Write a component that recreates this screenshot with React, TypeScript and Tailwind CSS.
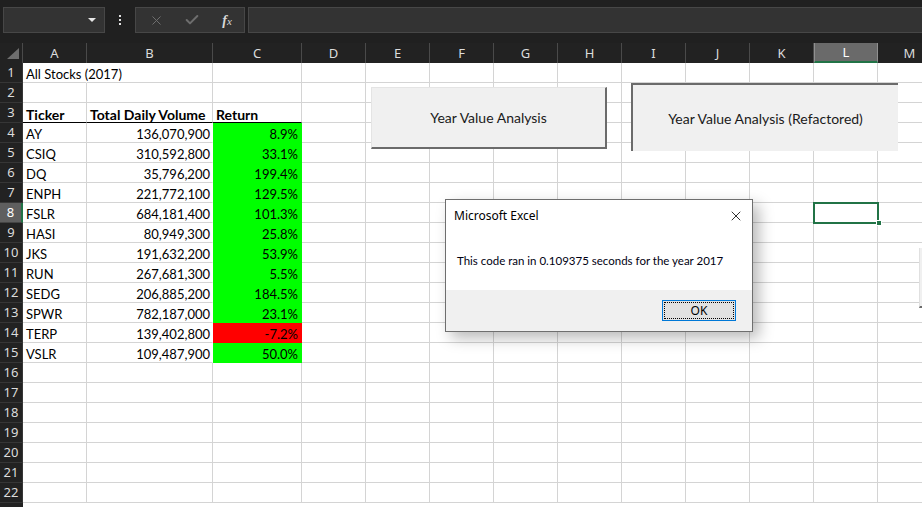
import { X, Check } from "lucide-react";

type Col = { letter: string; w: string };

const cols: Col[] = [
  { letter: "A", w: "w-[64px]" },
  { letter: "B", w: "w-[126px]" },
  { letter: "C", w: "w-[89px]" },
  { letter: "D", w: "w-[64px]" },
  { letter: "E", w: "w-[64px]" },
  { letter: "F", w: "w-[64px]" },
  { letter: "G", w: "w-[64px]" },
  { letter: "H", w: "w-[64px]" },
  { letter: "I", w: "w-[64px]" },
  { letter: "J", w: "w-[64px]" },
  { letter: "K", w: "w-[64px]" },
  { letter: "L", w: "w-[64px]" },
  { letter: "M", w: "w-[64px]" },
];

type Stock = { ticker: string; volume: string; ret: string };

const stocks: Stock[] = [
  { ticker: "AY", volume: "136,070,900", ret: "8.9%" },
  { ticker: "CSIQ", volume: "310,592,800", ret: "33.1%" },
  { ticker: "DQ", volume: "35,796,200", ret: "199.4%" },
  { ticker: "ENPH", volume: "221,772,100", ret: "129.5%" },
  { ticker: "FSLR", volume: "684,181,400", ret: "101.3%" },
  { ticker: "HASI", volume: "80,949,300", ret: "25.8%" },
  { ticker: "JKS", volume: "191,632,200", ret: "53.9%" },
  { ticker: "RUN", volume: "267,681,300", ret: "5.5%" },
  { ticker: "SEDG", volume: "206,885,200", ret: "184.5%" },
  { ticker: "SPWR", volume: "782,187,000", ret: "23.1%" },
  { ticker: "TERP", volume: "139,402,800", ret: "-7.2%" },
  { ticker: "VSLR", volume: "109,487,900", ret: "50.0%" },
];

function Toolbar() {
  return (
    <div className="flex h-[43px] items-start bg-[#202020] pt-[7px]">
      <div className="ml-[3px] flex h-[26px] w-[102px] items-center justify-end border border-[#474747] bg-[#333333] pr-[8px]">
        <div className="h-0 w-0 border-x-[4px] border-t-[4px] border-x-transparent border-t-[#e6e6e6]" />
      </div>
      <div className="flex h-[26px] w-[30px] flex-col items-center justify-center gap-[2px]">
        <div className="h-[2px] w-[2px] bg-[#e0e0e0]" />
        <div className="h-[2px] w-[2px] bg-[#e0e0e0]" />
        <div className="h-[2px] w-[2px] bg-[#e0e0e0]" />
      </div>
      <div className="flex h-[26px] w-[110px] items-center border border-[#474747] bg-[#333333]">
        <div className="flex w-[38px] justify-center pl-[2px]">
          <X size={15} strokeWidth={1.6} color="#6e6e6e" />
        </div>
        <div className="flex w-[36px] justify-center">
          <Check size={16} strokeWidth={3} color="#6e6e6e" />
        </div>
        <div className="flex w-[34px] justify-center font-['Liberation_Serif',serif] text-[14px] italic text-[#d8d8d8]">
          <span className="font-bold">f</span>
          <span className="mt-[3px] text-[11px]">x</span>
        </div>
      </div>
      <div className="ml-[3px] h-[26px] flex-1 border border-r-0 border-[#474747] bg-[#333333]" />
    </div>
  );
}

function ColumnHeaders() {
  return (
    <div className="flex h-[20px] bg-[#222222] font-['Noto_Sans',sans-serif] text-[13px] text-[#dcdcdc]">
      <div className="relative w-[23px] shrink-0 border-r border-[#4a4a4a]">
        <div className="absolute bottom-[4px] right-[3px] h-0 w-0 border-b-[11px] border-l-[12px] border-b-[#6e6e6e] border-l-transparent" />
      </div>
      {cols.map((c) => (
        <div
          key={c.letter}
          className={
            c.letter === "L"
              ? `${c.w} flex shrink-0 items-center justify-center border-x border-b-2 border-[#909090] border-b-[#217346] bg-[#6a6a6a] pt-[1px] leading-none text-white`
              : `${c.w} flex shrink-0 items-center justify-center border-r border-[#4a4a4a] pt-[1px] leading-none`
          }
        >
          {c.letter}
        </div>
      ))}
    </div>
  );
}

function Cell({
  w,
  children,
  className = "",
}: {
  w: string;
  children?: React.ReactNode;
  className?: string;
}) {
  return (
    <div
      className={`${w} flex h-full shrink-0 items-end overflow-visible whitespace-nowrap border-b border-r ${className}`}
    >
      <span className="translate-y-[1px] leading-[17px]">{children}</span>
    </div>
  );
}

function Row({ n }: { n: number }) {
  const stock = n >= 4 && n <= 15 ? stocks[n - 4] : null;
  const green = "bg-[#00ff00] border-b-[#00ff00] border-r-[#00ff00]";
  const red = "bg-[#ff0000] border-b-[#ff0000] border-r-[#ff0000]";

  let a: React.ReactNode = null;
  let b: React.ReactNode = null;
  let c: React.ReactNode = null;
  let aCls = "border-[#d4d4d4] pl-[3px]";
  let bCls = "border-[#d4d4d4] justify-end pr-[2px]";
  let cCls = "border-[#d4d4d4] justify-end pr-[3px]";

  if (n === 1) {
    a = "All Stocks (2017)";
    aCls = "border-b-[#d4d4d4] border-r-transparent pl-[3px] relative z-10";
  }
  if (n === 3) {
    a = "Ticker";
    b = "Total Daily Volume";
    c = "Return";
    aCls = "border-r-[#d4d4d4] border-b-black pl-[3px] font-bold text-[14px]";
    bCls = "border-r-[#d4d4d4] border-b-black pl-[3px] font-bold text-[14px]";
    cCls = "border-r-[#d4d4d4] border-b-black pl-[3px] font-bold text-[14px]";
  }
  if (stock) {
    const fill = stock.ret.startsWith("-") ? red : green;
    a = stock.ticker;
    b = stock.volume;
    c = stock.ret;
    bCls = "border-b-[#d4d4d4] border-r-transparent justify-end pr-[2px]";
    cCls = `${fill} justify-end pr-[3px]`;
  }

  const selectedRow = n === 8;

  return (
    <div className="flex h-[20px]">
      <div
        className={
          selectedRow
            ? "flex w-[23px] shrink-0 items-center justify-center border-b border-r-2 border-b-[#444444] border-r-[#217346] bg-[#5f5f5f] font-['Noto_Sans',sans-serif] text-[13px] leading-none text-white"
            : "flex w-[23px] shrink-0 items-center justify-center border-b border-r border-[#363636] bg-[#222222] font-['Noto_Sans',sans-serif] text-[13px] leading-none text-[#dcdcdc]"
        }
      >
        {n}
      </div>
      <Cell w="w-[64px]" className={aCls}>
        {a}
      </Cell>
      <Cell w="w-[126px]" className={bCls}>
        {b}
      </Cell>
      <Cell w="w-[89px]" className={cCls}>
        {c}
      </Cell>
      {cols.slice(3).map((col) => (
        <Cell key={col.letter} w={col.w} className="border-[#d4d4d4]" />
      ))}
    </div>
  );
}

function MacroButton({
  label,
  pressed,
  className,
}: {
  label: string;
  pressed?: boolean;
  className: string;
}) {
  return (
    <div
      className={
        pressed
          ? `absolute flex items-center justify-center border-l-2 border-t-2 border-[#6b6b6b] bg-[#f0f0f0] font-['Lato',sans-serif] text-[14px] text-[#1a1a1a] ${className}`
          : `absolute flex items-center justify-center border-b-2 border-l border-r-2 border-t border-[#6b6b6b] border-l-[#e4e4e4] border-t-[#e4e4e4] bg-[#f0f0f0] font-['Lato',sans-serif] text-[14px] text-[#1a1a1a] ${className}`
      }
    >
      {label}
    </div>
  );
}

function MessageBox() {
  return (
    <div className="absolute left-[445px] top-[199px] flex h-[133px] w-[308px] flex-col border border-[#6e6e6e] bg-white font-['Noto_Sans',sans-serif] text-[12px] text-black shadow-[6px_6px_14px_rgba(0,0,0,0.28)]">
      <div className="flex h-[32px] items-center justify-between pl-[8px] pr-[8px]">
        <span>Microsoft Excel</span>
        <X size={16} strokeWidth={1.3} color="#111" />
      </div>
      <div className="flex h-[58px] items-center pl-[11px] font-['Lato',sans-serif] text-[11.5px] text-[#000011]">
        This code ran in 0.109375 seconds for the year 2017
      </div>
      <div className="flex flex-1 items-center justify-end bg-[#f0f0f0] pr-[16px]">
        <div className="flex h-[21px] w-[74px] items-center justify-center border border-[#0078d7] bg-[#e1e1e1] p-[1px]">
          <div className="flex h-full w-full items-center justify-center border border-dotted border-black">
            OK
          </div>
        </div>
      </div>
    </div>
  );
}

export default function App() {
  const rows = Array.from({ length: 22 }, (_, i) => i + 1);
  return (
    <div className="relative h-[507px] w-[922px] overflow-hidden bg-white font-['Lato',sans-serif] text-[13px] text-black">
      <Toolbar />
      <ColumnHeaders />
      <div className="flex flex-col">
        {rows.map((n) => (
          <Row key={n} n={n} />
        ))}
        <div className="flex h-[20px]">
          <div className="w-[23px] shrink-0 bg-[#222222]" />
        </div>
      </div>

      <MacroButton
        label="Year Value Analysis"
        className="left-[371px] top-[87px] h-[62px] w-[236px]"
      />
      <MacroButton
        label="Year Value Analysis (Refactored)"
        pressed
        className="left-[631px] top-[83px] h-[68px] w-[267px]"
      />

      {/* selected cell L8 */}
      <div className="absolute left-[813px] top-[202px] h-[22px] w-[66px] border-2 border-[#217346]" />
      <div className="absolute left-[876px] top-[220px] h-[6px] w-[6px] border border-white bg-[#217346]" />

      {/* edge of another button off screen */}
      <div className="absolute left-[919px] top-[248px] h-[60px] w-[10px] border-b-2 border-l border-b-[#6b6b6b] border-l-[#e0e0e0] bg-[#f0f0f0]" />

      <MessageBox />
    </div>
  );
}
